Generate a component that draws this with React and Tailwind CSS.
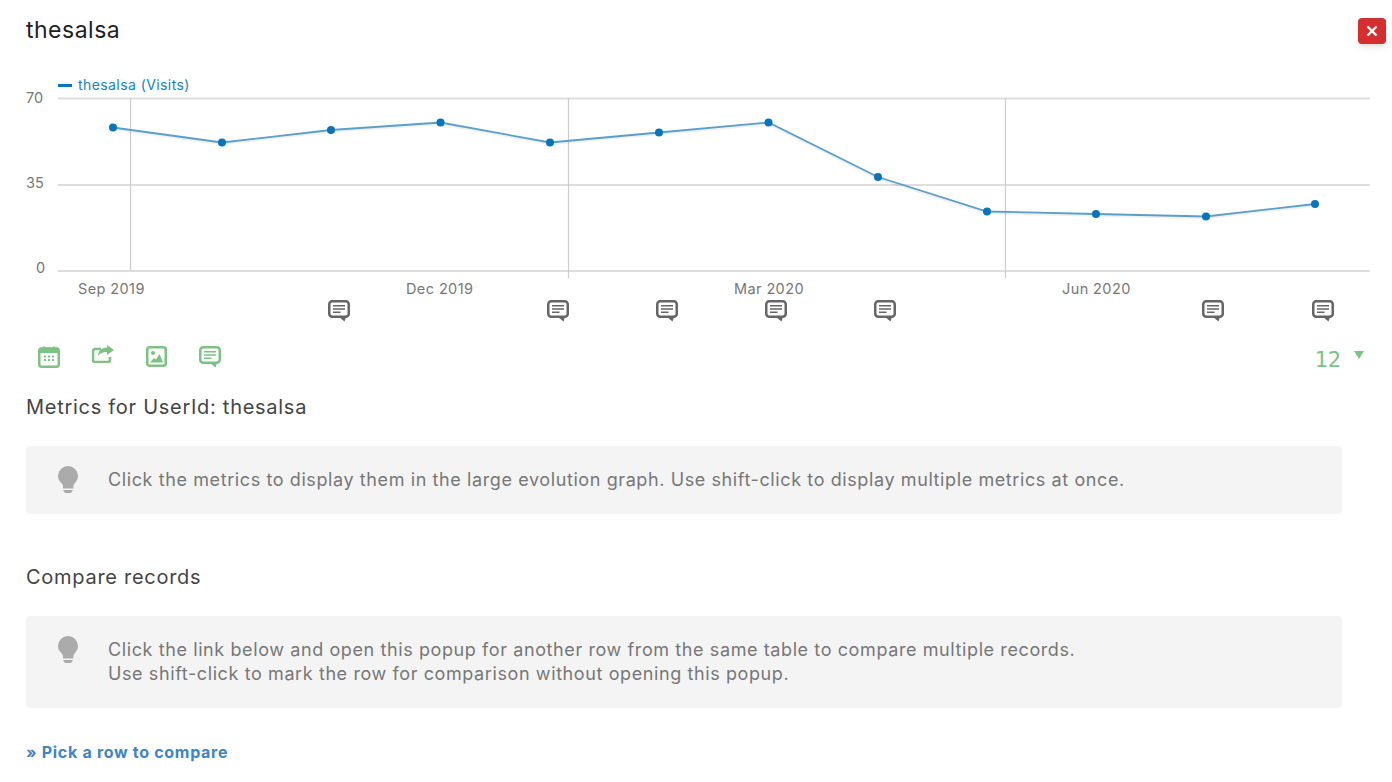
const points = [
  [113, 127.5], [222, 142.5], [331, 130], [440.5, 122.5], [550, 142.5], [659, 132.5],
  [768.5, 122.5], [878, 177], [987, 211.5], [1096, 214], [1206, 216.5], [1315, 204],
];
const noteXs = [339, 558, 667, 776, 885, 1213, 1323];
const line = points.map((p) => p.join(",")).join(" ");

// speech bubble used for chart annotations and the toolbar
function NoteShape({ color }) {
  return (
    <>
      <rect x="1.25" y="1.25" width="19.5" height="15.5" rx="3" fill="#fff" stroke={color} strokeWidth="2.5" />
      <path d="M11 17h7l-1.500 4.500z" fill={color} />
      <path d="M5 5.800h12M5 9h12M5 12.200h7.500" stroke={color} strokeWidth="1.500" />
    </>
  );
}

function Chart() {
  return (
    <svg viewBox="26 72 1350 256" className="block w-[1350px] h-[256px]" style={{ fontFamily: "Inter, sans-serif" }}>
      <rect x="58" y="84" width="14" height="3" fill="#0a74bb" />
      <text x="78" y="90" fontSize="14" letterSpacing="0.42" fill="#1a7fc1">thesalsa (Visits)</text>

      <path d="M58 98.500H1370M58 185H1370M58 271H1370" stroke="#dedede" strokeWidth="1.800" />
      <path d="M130.500 98V271M568.500 98V278M1005.500 98V278" stroke="#cccccc" strokeWidth="1.200" />

      <g fontSize="14.5" fill="#777777">
        <text x="26" y="103">70</text>
        <text x="26" y="188">35</text>
        <text x="36" y="273">0</text>
        <g letterSpacing="0.4">
          <text x="78" y="294">Sep 2019</text>
          <text x="406" y="294">Dec 2019</text>
          <text x="734" y="294">Mar 2020</text>
          <text x="1062" y="294">Jun 2020</text>
        </g>
      </g>

      <polyline points={line} fill="none" stroke="#000" strokeOpacity="0.06" strokeWidth="2.5" transform="translate(0 1.5)" />
      <polyline points={line} fill="none" stroke="#5a9fcb" strokeWidth="1.8" />
      {points.map(([x, y]) => (
        <circle key={x} cx={x} cy={y} r="4" fill="#0a74bb" />
      ))}

      {noteXs.map((x) => (
        <g key={x} transform={`translate(${x - 11} 300)`}>
          <NoteShape color="#666666" />
        </g>
      ))}
    </svg>
  );
}

function CalendarIcon() {
  return (
    <svg width="22" height="22" viewBox="0 0 22 22">
      <rect x="1.25" y="2.5" width="19.5" height="18.25" rx="2.5" fill="#fff" stroke="#7cc283" strokeWidth="2.5" />
      <path d="M1 3.500a2 2 0 0 1 2-2h2V.500h2v1h8v-1h2v1h2a2 2 0 0 1 2 2V7H1z" fill="#7cc283" />
      <path d="M6 10.500h2M10 10.500h2M14 10.500h2M6 14h2M10 14h2M14 14h2" stroke="#7cc283" strokeWidth="2" />
    </svg>
  );
}

function ShareIcon() {
  return (
    <svg width="22" height="18" viewBox="0 0 22 18" className="-mt-px">
      <path d="M9 4H3a2 2 0 0 0-2 2v9a2 2 0 0 0 2 2h13a2 2 0 0 0 2-2v-3" fill="none" stroke="#7cc283" strokeWidth="2.500" />
      <path d="M15 0l7 5-7 5V7c-4 0-7 1-9 4 0-5 3-8 9-8.500z" fill="#7cc283" />
    </svg>
  );
}

function ImageIcon() {
  return (
    <svg width="21" height="21" viewBox="0 0 21 21">
      <rect x="1.25" y="1.25" width="18.5" height="18.5" rx="2.5" fill="#fff" stroke="#7cc283" strokeWidth="2.5" />
      <circle cx="7" cy="7" r="2" fill="#7cc283" />
      <path d="M4 16.500l4-4.500 2 1.500 3.500-5.500 3.500 8.500z" fill="#7cc283" />
    </svg>
  );
}

function BulbIcon() {
  return (
    <svg width="20" height="28" viewBox="0 0 20 28" className="shrink-0 -my-[2px]">
      <path d="M10 0a10 10 0 0 1 10 10c0 3-1.300 5-2.800 6.700-1 1.100-1.600 2.100-1.800 3.300v2.500H5V20c-.2-1.200-1-2.200-2-3.300C1.300 15 0 13 0 10A10 10 0 0 1 10 0z" fill="#ababab" />
      <path d="M5 24h10l-2 3H7z" fill="#ababab" />
    </svg>
  );
}

function InfoBox({ children }) {
  return (
    <div className="flex items-start gap-[30px] bg-[#f4f4f4] pl-[32px] pr-4 py-[22px] w-[1316px] rounded-sm">
      <BulbIcon />
      <p className="text-[18px] leading-[24px] tracking-[0.6px] text-[#777777]">{children}</p>
    </div>
  );
}

export default function App() {
  return (
    <div className="relative h-[782px] overflow-hidden bg-white px-[26px] font-['Inter',sans-serif]">
      <h1 className="pt-[14px] text-[23px] leading-[32px] tracking-[0.5px] text-[#212121]">thesalsa</h1>

      <button className="absolute right-[6px] top-[18px] flex h-[26px] w-[28px] items-center justify-center rounded bg-[#d32f2f] shadow-md">
        <svg width="12" height="12" viewBox="0 0 12 12">
          <path d="M1.500 1.500l9 9M10.500 1.500l-9 9" stroke="#fff" strokeWidth="2.400" />
        </svg>
      </button>

      <div className="mt-[26px]">
        <Chart />
      </div>

      <div className="relative mt-[18px] flex h-[28px] items-start pl-[12px] w-[1338px]">
        <div className="flex items-start gap-[32px]">
          <CalendarIcon />
          <ShareIcon />
          <ImageIcon />
          <svg width="22" height="22" viewBox="0 0 22 22"><NoteShape color="#7cc283" /></svg>
        </div>
        <div className="ml-auto flex items-start gap-[13px] text-[#7cc283]">
          <span className="font-['DejaVu_Sans_Mono',monospace] text-[22px] leading-[28px]">12</span>
          <svg width="10" height="8" viewBox="0 0 10 8" className="mt-[5px]"><path d="M0 0h10L5 8z" fill="#7cc283" /></svg>
        </div>
      </div>

      <h2 className="mt-[19px] text-[20px] leading-[28px] tracking-[0.72px] text-[#444444]">Metrics for UserId: thesalsa</h2>
      <div className="mt-[25px]">
        <InfoBox>Click the metrics to display them in the large evolution graph. Use shift-click to display multiple metrics at once.</InfoBox>
      </div>

      <h2 className="mt-[49px] text-[20px] leading-[28px] tracking-[0.72px] text-[#444444]">Compare records</h2>
      <div className="mt-[25px]">
        <InfoBox>
          Click the link below and open this popup for another row from the same table to compare multiple records.
          <br />
          Use shift-click to mark the row for comparison without opening this popup.
        </InfoBox>
      </div>

      <a href="#compare" className="mt-[34px] block text-[16px] font-bold leading-[20px] tracking-[0.7px] text-[#4183c4]">» Pick a row to compare</a>
    </div>
  );
}
